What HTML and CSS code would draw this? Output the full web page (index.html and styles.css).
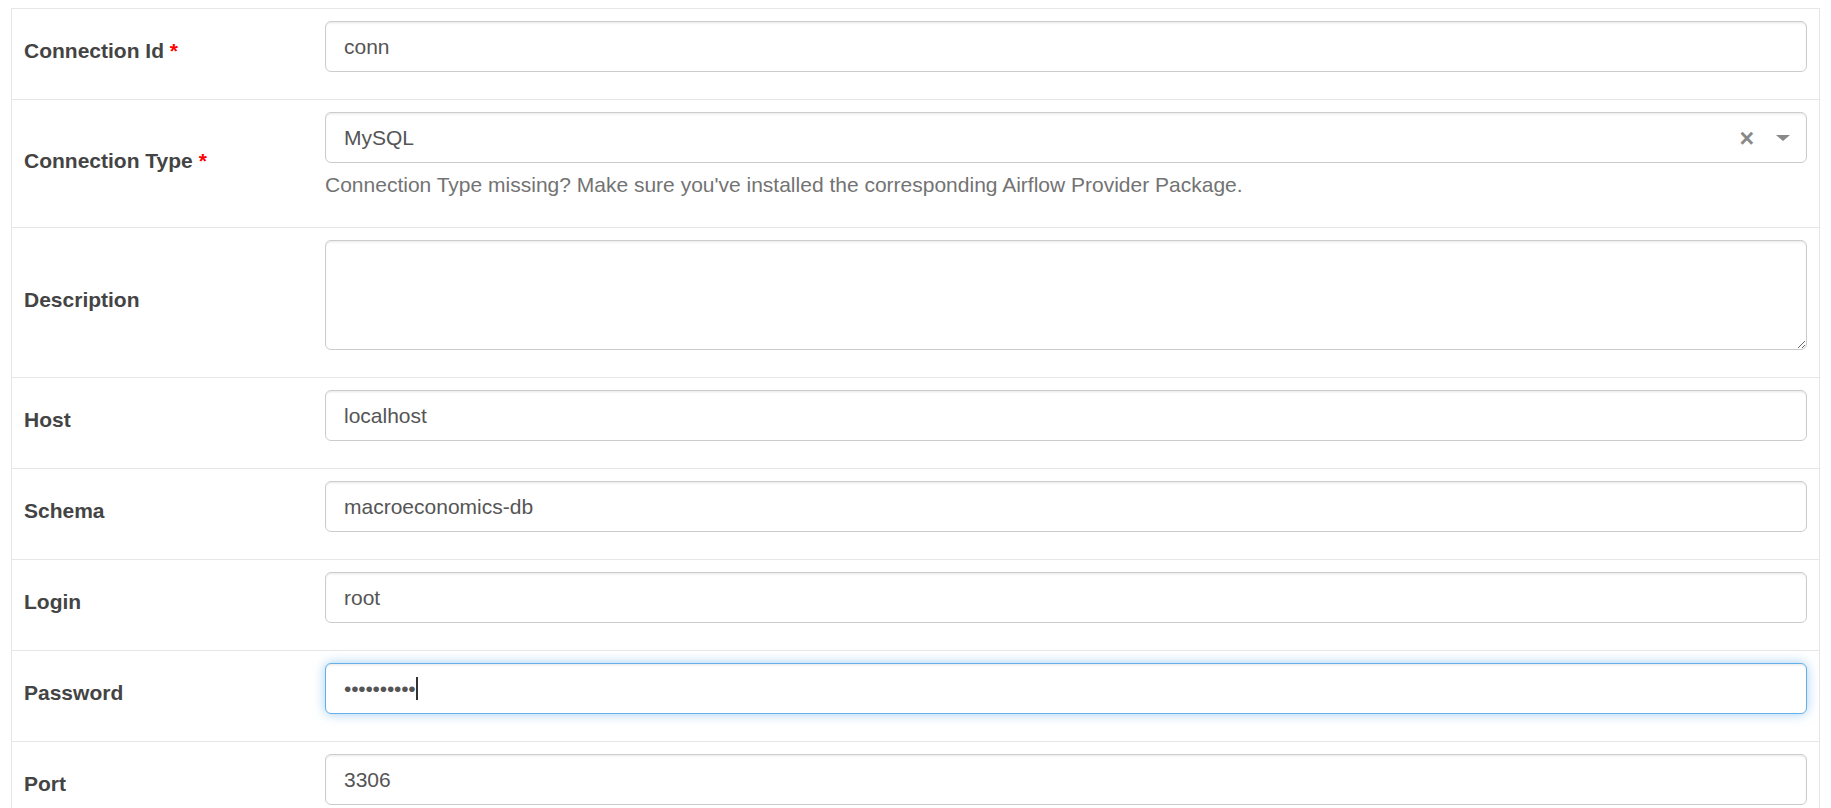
FILE: index.html
```html
<!DOCTYPE html>
<html>
<head>
<meta charset="utf-8">
<title>Edit Connection</title>
<link rel="stylesheet" href="styles.css">
</head>
<body>
<form class="conn-form">
  <div class="form-row">
    <div class="label-cell"><label>Connection Id <strong class="req">*</strong></label></div>
    <div class="field-cell"><input class="form-control" type="text" value="conn"></div>
  </div>
  <div class="form-row">
    <div class="label-cell"><label>Connection Type <strong class="req">*</strong></label></div>
    <div class="field-cell">
      <div class="form-control select">
        <span class="select-value">MySQL</span>
        <span class="select-clear">×</span>
        <span class="select-arrow"></span>
      </div>
      <p class="help-block">Connection Type missing? Make sure you've installed the corresponding Airflow Provider Package.</p>
    </div>
  </div>
  <div class="form-row">
    <div class="label-cell"><label>Description</label></div>
    <div class="field-cell"><textarea class="form-control textarea" rows="3"></textarea></div>
  </div>
  <div class="form-row">
    <div class="label-cell"><label>Host</label></div>
    <div class="field-cell"><input class="form-control" type="text" value="localhost"></div>
  </div>
  <div class="form-row">
    <div class="label-cell"><label>Schema</label></div>
    <div class="field-cell"><input class="form-control" type="text" value="macroeconomics-db"></div>
  </div>
  <div class="form-row">
    <div class="label-cell"><label>Login</label></div>
    <div class="field-cell"><input class="form-control" type="text" value="root"></div>
  </div>
  <div class="form-row">
    <div class="label-cell"><label>Password</label></div>
    <div class="field-cell"><div class="form-control focused"><span class="dots">••••••••••</span><span class="caret"></span></div></div>
  </div>
  <div class="form-row">
    <div class="label-cell"><label>Port</label></div>
    <div class="field-cell"><input class="form-control" type="text" value="3306"></div>
  </div>
</form>
</body>
</html>
```

FILE: styles.css
```css
html, body {
  margin: 0;
  padding: 0;
  background: #fff;
}
body {
  padding: 8px 11px 0 11px;
  font-family: "Liberation Sans", Arial, sans-serif;
  font-size: 21px;
  line-height: 30px;
  color: #444;
}
.conn-form {
  border-left: 1px solid #e6e6e6;
  border-right: 1px solid #e6e6e6;
}
.form-row {
  display: grid;
  grid-template-columns: 301px 1fr;
  border-top: 1px solid #e6e6e6;
}
.label-cell {
  display: flex;
  align-items: center;
  padding: 12px;
}
.label-cell label {
  display: inline-block;
  font-weight: bold;
  margin-bottom: 6px;
  color: #444;
}
.req {
  color: #f00;
}
.field-cell {
  padding: 12px 12px 27px 12px;
  min-width: 0;
}
.form-control {
  display: block;
  box-sizing: border-box;
  width: 100%;
  height: 51px;
  margin: 0;
  padding: 9px 18px;
  font-family: "Liberation Sans", Arial, sans-serif;
  font-size: 21px;
  line-height: 30px;
  color: #555;
  background: #fff;
  border: 1px solid #ccc;
  border-radius: 6px;
  box-shadow: inset 0 1.5px 1.5px rgba(0, 0, 0, 0.075);
  outline: none;
}
.textarea {
  height: 110px;
  resize: vertical;
}
.select {
  display: flex;
  align-items: center;
  padding-right: 0;
}
.select-value {
  flex: 1;
  color: #555;
}
.select-clear {
  font-weight: bold;
  color: #888;
  font-size: 25px;
  margin-right: 22px;
  line-height: 30px;
}
.select-arrow {
  width: 0;
  height: 0;
  border-style: solid;
  border-width: 6px 7px 0 7px;
  border-color: #888 transparent transparent transparent;
  margin-right: 16px;
}
.help-block {
  margin: 7px 0 0 0;
  color: #737373;
}
.focused {
  display: flex;
  align-items: center;
  border-color: #66afe9;
  box-shadow: inset 0 1.5px 1.5px rgba(0, 0, 0, 0.075), 0 0 12px rgba(102, 175, 233, 0.6);
}
.dots {
  color: #555;
  letter-spacing: -0.2px;
}
.caret {
  display: inline-block;
  width: 2px;
  height: 23px;
  background: #333;
  margin-left: 0;
}
```
